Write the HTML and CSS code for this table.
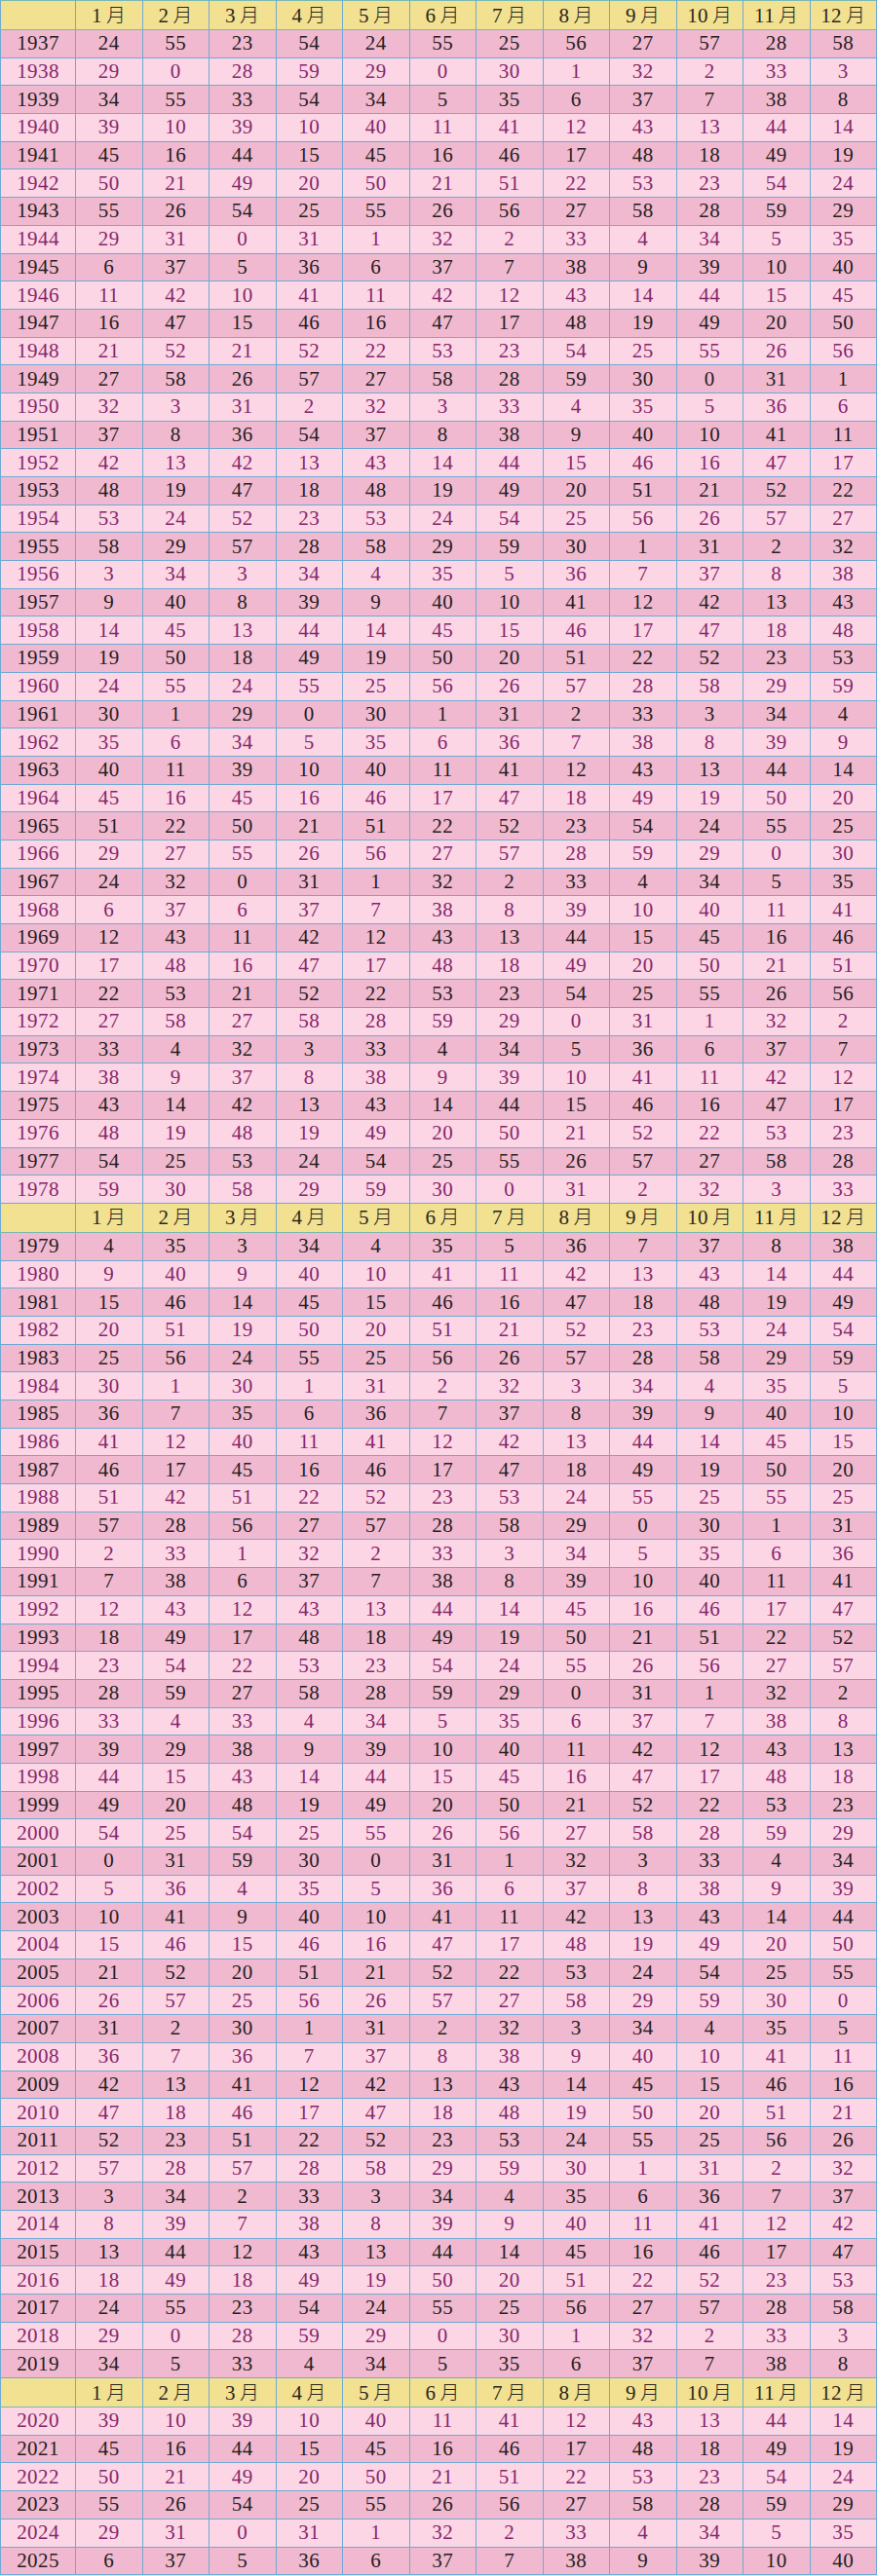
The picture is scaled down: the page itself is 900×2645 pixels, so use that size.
FILE: index.html
```html
<!DOCTYPE html>
<html lang="zh">
<head>
<meta charset="utf-8">
<title>日干支表</title>
<link rel="stylesheet" href="styles.css">
</head>
<body>
<table class="tbl" id="tbl">
<colgroup><col class="c-year"><col span="12" class="c-m"></colgroup>
<tbody id="body"></tbody>
</table>
<script src="app.js"></script>
</body>
</html>
```
FILE: styles.css
```css
html, body { margin: 0; padding: 0; background: #fbd5e4; }
.tbl {
  width: 900px;
  border-collapse: collapse;
  table-layout: fixed;
  font-family: "Liberation Serif", "Noto Sans CJK SC", serif;
  font-size: 21px;
}
.c-year { width: 77px; }
.tbl td {
  border: 1px solid #6fa9d4;
  text-align: center;
  vertical-align: middle;
  padding: 0;
  line-height: 1;
  letter-spacing: 0.4px;
}
.row { height: 28.7px; }
.row.odd td { background: #f1b9cf; color: #26201f; }
.row.even td { background: #fcd6e5; color: #86276b; }
.head { height: 30px; }
.head td { background: #f2e190; color: #2a2620; border-color: #7ab8b0; border-left-color: #6fa9d4; border-right-color: #6fa9d4; }
.mo { font-family: "Noto Sans CJK SC", sans-serif; font-size: 20px; margin-left: 4px; font-weight: 300; }
```
FILE: app.js
```js
var data = {
1937:"24 55 23 54 24 55 25 56 27 57 28 58",
1938:"29 0 28 59 29 0 30 1 32 2 33 3",
1939:"34 55 33 54 34 5 35 6 37 7 38 8",
1940:"39 10 39 10 40 11 41 12 43 13 44 14",
1941:"45 16 44 15 45 16 46 17 48 18 49 19",
1942:"50 21 49 20 50 21 51 22 53 23 54 24",
1943:"55 26 54 25 55 26 56 27 58 28 59 29",
1944:"29 31 0 31 1 32 2 33 4 34 5 35",
1945:"6 37 5 36 6 37 7 38 9 39 10 40",
1946:"11 42 10 41 11 42 12 43 14 44 15 45",
1947:"16 47 15 46 16 47 17 48 19 49 20 50",
1948:"21 52 21 52 22 53 23 54 25 55 26 56",
1949:"27 58 26 57 27 58 28 59 30 0 31 1",
1950:"32 3 31 2 32 3 33 4 35 5 36 6",
1951:"37 8 36 54 37 8 38 9 40 10 41 11",
1952:"42 13 42 13 43 14 44 15 46 16 47 17",
1953:"48 19 47 18 48 19 49 20 51 21 52 22",
1954:"53 24 52 23 53 24 54 25 56 26 57 27",
1955:"58 29 57 28 58 29 59 30 1 31 2 32",
1956:"3 34 3 34 4 35 5 36 7 37 8 38",
1957:"9 40 8 39 9 40 10 41 12 42 13 43",
1958:"14 45 13 44 14 45 15 46 17 47 18 48",
1959:"19 50 18 49 19 50 20 51 22 52 23 53",
1960:"24 55 24 55 25 56 26 57 28 58 29 59",
1961:"30 1 29 0 30 1 31 2 33 3 34 4",
1962:"35 6 34 5 35 6 36 7 38 8 39 9",
1963:"40 11 39 10 40 11 41 12 43 13 44 14",
1964:"45 16 45 16 46 17 47 18 49 19 50 20",
1965:"51 22 50 21 51 22 52 23 54 24 55 25",
1966:"29 27 55 26 56 27 57 28 59 29 0 30",
1967:"24 32 0 31 1 32 2 33 4 34 5 35",
1968:"6 37 6 37 7 38 8 39 10 40 11 41",
1969:"12 43 11 42 12 43 13 44 15 45 16 46",
1970:"17 48 16 47 17 48 18 49 20 50 21 51",
1971:"22 53 21 52 22 53 23 54 25 55 26 56",
1972:"27 58 27 58 28 59 29 0 31 1 32 2",
1973:"33 4 32 3 33 4 34 5 36 6 37 7",
1974:"38 9 37 8 38 9 39 10 41 11 42 12",
1975:"43 14 42 13 43 14 44 15 46 16 47 17",
1976:"48 19 48 19 49 20 50 21 52 22 53 23",
1977:"54 25 53 24 54 25 55 26 57 27 58 28",
1978:"59 30 58 29 59 30 0 31 2 32 3 33",
1979:"4 35 3 34 4 35 5 36 7 37 8 38",
1980:"9 40 9 40 10 41 11 42 13 43 14 44",
1981:"15 46 14 45 15 46 16 47 18 48 19 49",
1982:"20 51 19 50 20 51 21 52 23 53 24 54",
1983:"25 56 24 55 25 56 26 57 28 58 29 59",
1984:"30 1 30 1 31 2 32 3 34 4 35 5",
1985:"36 7 35 6 36 7 37 8 39 9 40 10",
1986:"41 12 40 11 41 12 42 13 44 14 45 15",
1987:"46 17 45 16 46 17 47 18 49 19 50 20",
1988:"51 42 51 22 52 23 53 24 55 25 55 25",
1989:"57 28 56 27 57 28 58 29 0 30 1 31",
1990:"2 33 1 32 2 33 3 34 5 35 6 36",
1991:"7 38 6 37 7 38 8 39 10 40 11 41",
1992:"12 43 12 43 13 44 14 45 16 46 17 47",
1993:"18 49 17 48 18 49 19 50 21 51 22 52",
1994:"23 54 22 53 23 54 24 55 26 56 27 57",
1995:"28 59 27 58 28 59 29 0 31 1 32 2",
1996:"33 4 33 4 34 5 35 6 37 7 38 8",
1997:"39 29 38 9 39 10 40 11 42 12 43 13",
1998:"44 15 43 14 44 15 45 16 47 17 48 18",
1999:"49 20 48 19 49 20 50 21 52 22 53 23",
2000:"54 25 54 25 55 26 56 27 58 28 59 29",
2001:"0 31 59 30 0 31 1 32 3 33 4 34",
2002:"5 36 4 35 5 36 6 37 8 38 9 39",
2003:"10 41 9 40 10 41 11 42 13 43 14 44",
2004:"15 46 15 46 16 47 17 48 19 49 20 50",
2005:"21 52 20 51 21 52 22 53 24 54 25 55",
2006:"26 57 25 56 26 57 27 58 29 59 30 0",
2007:"31 2 30 1 31 2 32 3 34 4 35 5",
2008:"36 7 36 7 37 8 38 9 40 10 41 11",
2009:"42 13 41 12 42 13 43 14 45 15 46 16",
2010:"47 18 46 17 47 18 48 19 50 20 51 21",
2011:"52 23 51 22 52 23 53 24 55 25 56 26",
2012:"57 28 57 28 58 29 59 30 1 31 2 32",
2013:"3 34 2 33 3 34 4 35 6 36 7 37",
2014:"8 39 7 38 8 39 9 40 11 41 12 42",
2015:"13 44 12 43 13 44 14 45 16 46 17 47",
2016:"18 49 18 49 19 50 20 51 22 52 23 53",
2017:"24 55 23 54 24 55 25 56 27 57 28 58",
2018:"29 0 28 59 29 0 30 1 32 2 33 3",
2019:"34 5 33 4 34 5 35 6 37 7 38 8",
2020:"39 10 39 10 40 11 41 12 43 13 44 14",
2021:"45 16 44 15 45 16 46 17 48 18 49 19",
2022:"50 21 49 20 50 21 51 22 53 23 54 24",
2023:"55 26 54 25 55 26 56 27 58 28 59 29",
2024:"29 31 0 31 1 32 2 33 4 34 5 35",
2025:"6 37 5 36 6 37 7 38 9 39 10 40"
};
var body = document.getElementById("body");
function header() {
  var tr = document.createElement("tr");
  tr.className = "head";
  var html = "<td></td>";
  for (var m = 1; m <= 12; m++) html += "<td>" + m + "<span class=\"mo\">月</span></td>";
  tr.innerHTML = html;
  body.appendChild(tr);
}
for (var y = 1937; y <= 2025; y++) {
  if (y === 1937 || y === 1979 || y === 2020) header();
  var tr = document.createElement("tr");
  tr.className = "row " + (y % 2 ? "odd" : "even");
  var vals = data[y].split(" ");
  var html = "<td>" + y + "</td>";
  for (var i = 0; i < 12; i++) html += "<td>" + vals[i] + "</td>";
  tr.innerHTML = html;
  body.appendChild(tr);
}
```
